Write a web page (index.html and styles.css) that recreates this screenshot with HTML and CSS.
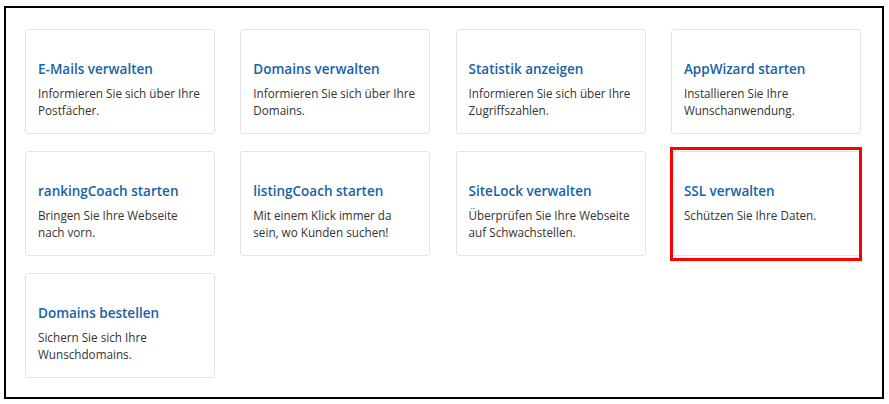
FILE: index.html
```html
<html>
<head>
<meta charset="utf-8">
<link rel="stylesheet" href="styles.css">
</head>
<body>

<div id="frame">
	<div class="tiles">
		<div class="tile">
			<div class="title">E-Mails verwalten</div>
			<div class="text">Informieren Sie sich über Ihre Postfächer.</div>
		</div>
		<div class="tile">
			<div class="title">Domains verwalten</div>
			<div class="text">Informieren Sie sich über Ihre Domains.</div>
		</div>
		<div class="tile">
			<div class="title">Statistik anzeigen</div>
			<div class="text">Informieren Sie sich über Ihre Zugriffszahlen.</div>
		</div>
		<div class="tile">
			<div class="title">AppWizard starten</div>
			<div class="text">Installieren Sie Ihre Wunschanwendung.</div>
		</div>
		<div class="tile">
			<div class="title">rankingCoach starten</div>
			<div class="text">Bringen Sie Ihre Webseite nach vorn.</div>
		</div>
		<div class="tile">
			<div class="title">listingCoach starten</div>
			<div class="text">Mit einem Klick immer da sein, wo Kunden suchen!</div>
		</div>
		<div class="tile">
			<div class="title">SiteLock verwalten</div>
			<div class="text">Überprüfen Sie Ihre Webseite auf Schwachstellen.</div>
		</div>
		<div class="tile marked">
			<div class="title">SSL verwalten</div>
			<div class="text">Schützen Sie Ihre Daten.</div>
		</div>
		<div class="tile">
			<div class="title">Domains bestellen</div>
			<div class="text">Sichern Sie sich Ihre Wunschdomains.</div>
		</div>
	</div>
</div>

</body>
</html>
```

FILE: styles.css
```css
body {
	margin: 0;
	padding: 0;
	background-color: #fff;
	font-family: "Open Sans", "Noto Sans", sans-serif;
}

#frame {
	margin: 6px 0 0 4px;
	width: 880px;
	height: 393px;
	border: 2px solid #000;
	padding: 21px 21px 0 19px;
	box-sizing: border-box;
}

.tiles {
	display: grid;
	grid-template-columns: repeat(4, 190px);
	grid-auto-rows: 105px;
	column-gap: 25.3px;
	row-gap: 17px;
}

.tile {
	position: relative;
	border: 1px solid #e4e4e4;
	border-radius: 3px;
	padding: 29px 12px 0 12px;
	box-sizing: border-box;
}

.title {
	font-size: 13.5px;
	font-weight: 600;
	line-height: 20px;
	color: #1762a6;
}

.text {
	margin-top: 6px;
	font-size: 11.7px;
	line-height: 17px;
	color: #333;
}

.tile.marked::after {
	content: "";
	position: absolute;
	left: -2px;
	top: -5px;
	right: -2px;
	bottom: -6px;
	border: 3px solid #f00;
}
```
